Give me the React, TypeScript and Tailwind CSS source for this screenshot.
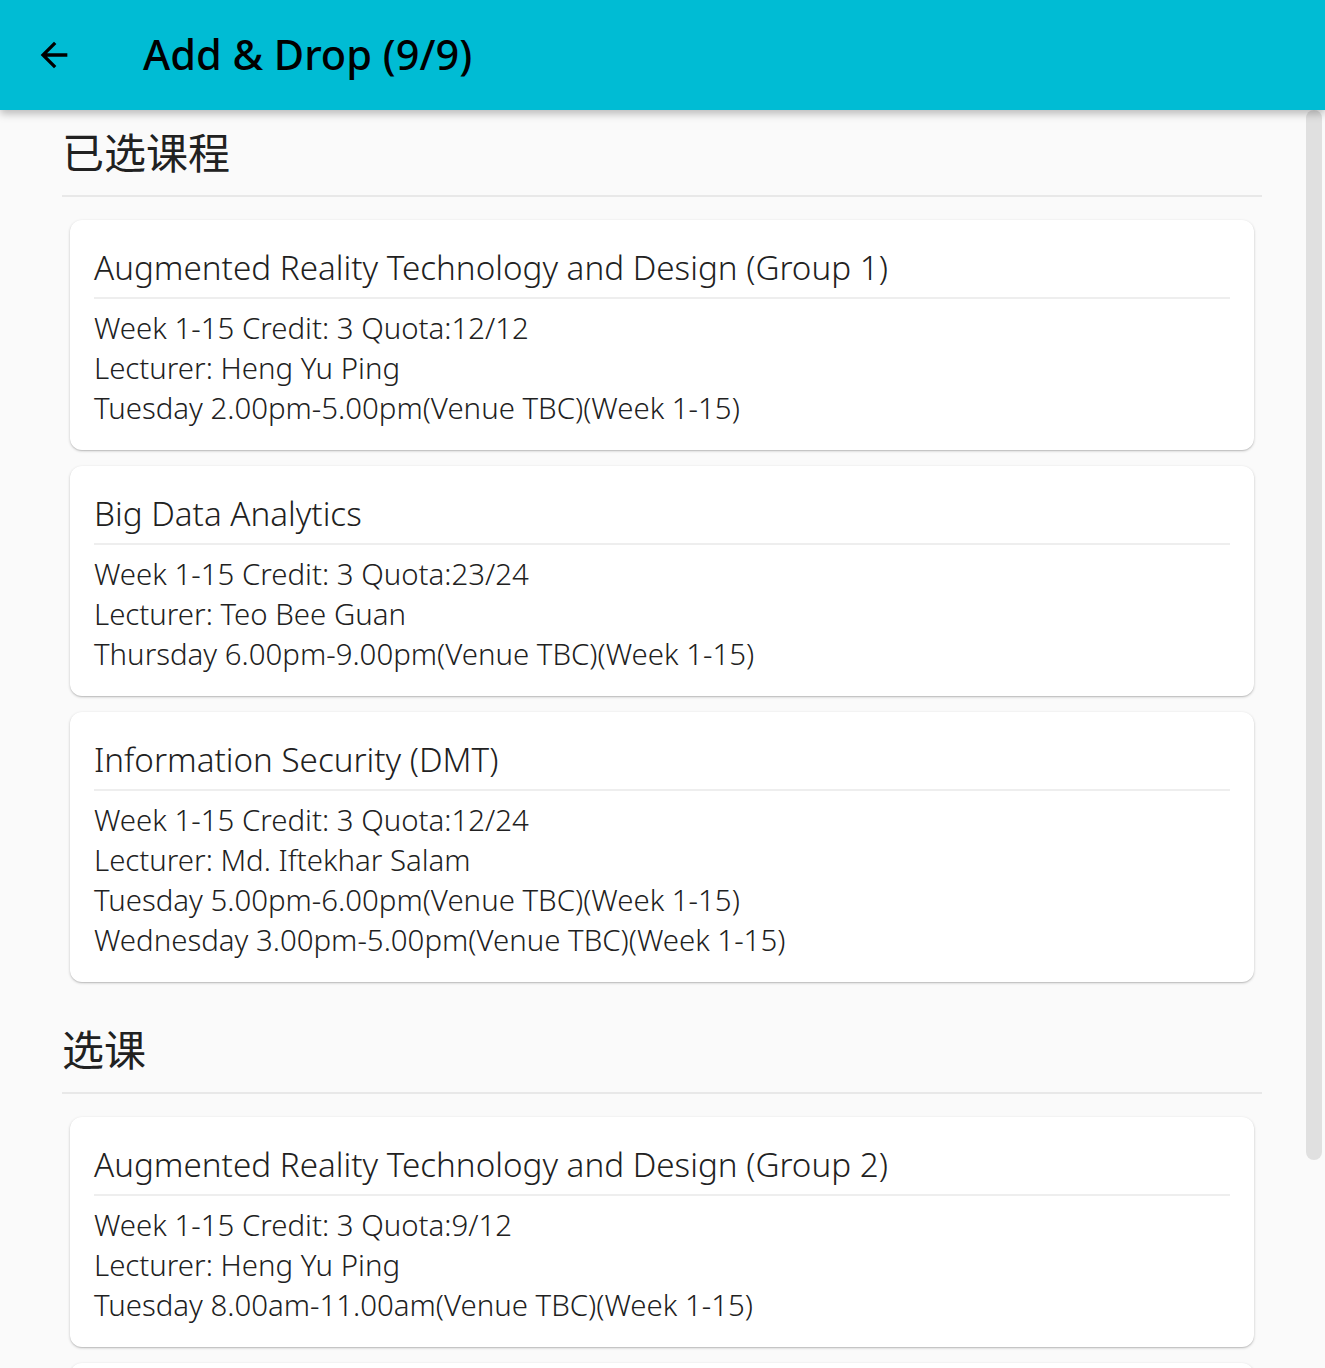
import React from "react";

type Course = {
  title: string;
  lines: string[];
};

const selected: Course[] = [
  {
    title: "Augmented Reality Technology and Design (Group 1)",
    lines: [
      "Week 1-15 Credit: 3 Quota:12/12",
      "Lecturer: Heng Yu Ping",
      "Tuesday 2.00pm-5.00pm(Venue TBC)(Week 1-15)",
    ],
  },
  {
    title: "Big Data Analytics",
    lines: [
      "Week 1-15 Credit: 3 Quota:23/24",
      "Lecturer: Teo Bee Guan",
      "Thursday 6.00pm-9.00pm(Venue TBC)(Week 1-15)",
    ],
  },
  {
    title: "Information Security (DMT)",
    lines: [
      "Week 1-15 Credit: 3 Quota:12/24",
      "Lecturer: Md. Iftekhar Salam",
      "Tuesday 5.00pm-6.00pm(Venue TBC)(Week 1-15)",
      "Wednesday 3.00pm-5.00pm(Venue TBC)(Week 1-15)",
    ],
  },
];

const available: Course[] = [
  {
    title: "Augmented Reality Technology and Design (Group 2)",
    lines: [
      "Week 1-15 Credit: 3 Quota:9/12",
      "Lecturer: Heng Yu Ping",
      "Tuesday 8.00am-11.00am(Venue TBC)(Week 1-15)",
    ],
  },
];

const font = {
  fontFamily: '"Noto Sans", "Noto Sans CJK SC", sans-serif',
};

const cardShadow =
  "rounded-xl bg-white shadow-[0_1px_3px_rgba(0,0,0,0.2),0_1px_1px_rgba(0,0,0,0.1)]";

function CourseCard({ course }: { course: Course }) {
  return (
    <div className={`mx-2 mb-4 px-6 pt-[28px] pb-[22px] ${cardShadow}`}>
      <div className="text-[33.2px] font-light leading-[40px] text-[#212121]">{course.title}</div>
      <div className="mt-[9px] mb-[9px] h-[2px] bg-[#eeeeee]" />
      {course.lines.map((line, i) => (
        <div key={i} className="text-[29.4px] font-light leading-[40px] text-[#212121]">
          {line}
        </div>
      ))}
    </div>
  );
}

function Section({ title, courses }: { title: string; courses: Course[] }) {
  return (
    <div>
      <div className="text-[42px] leading-[56px] text-[#212121]">{title}</div>
      <div className="mt-[14px] mb-[23px] h-[2px] bg-[#e8e8e8]" />
      {courses.map((c, i) => (
        <CourseCard key={i} course={c} />
      ))}
    </div>
  );
}

export default function App() {
  return (
    <div className="relative h-[1368px] w-full overflow-hidden bg-[#fafafa]" style={font}>
      {/* App bar */}
      <header className="relative z-10 flex h-[110px] items-center bg-[#00bcd4] shadow-[0_4px_8px_rgba(0,0,0,0.25)]">
        <button className="ml-[34px] flex h-10 w-10 items-center justify-center" aria-label="Back">
          <svg width="40" height="40" viewBox="0 0 24 24" fill="#000">
            <path d="M20 11H7.83l5.59-5.59L12 4l-8 8 8 8 1.41-1.41L7.83 13H20v-2z" />
          </svg>
        </button>
        <h1 className="ml-[69px] text-[41.5px] font-medium leading-none text-black">Add &amp; Drop (9/9)</h1>
      </header>

      {/* Content */}
      <main className="pl-[62px] pr-[63px] pt-[15px]">
        <Section title="已选课程" courses={selected} />
        <div className="h-6" />
        <Section title="选课" courses={available} />
        {/* next card, scrolled below the fold */}
        <div className={`mx-2 h-[230px] ${cardShadow}`} />
      </main>

      {/* Scrollbar */}
      <div className="absolute right-[3px] top-[110px] h-[1050px] w-4 rounded-full bg-[#e0e0e0]" />
    </div>
  );
}
